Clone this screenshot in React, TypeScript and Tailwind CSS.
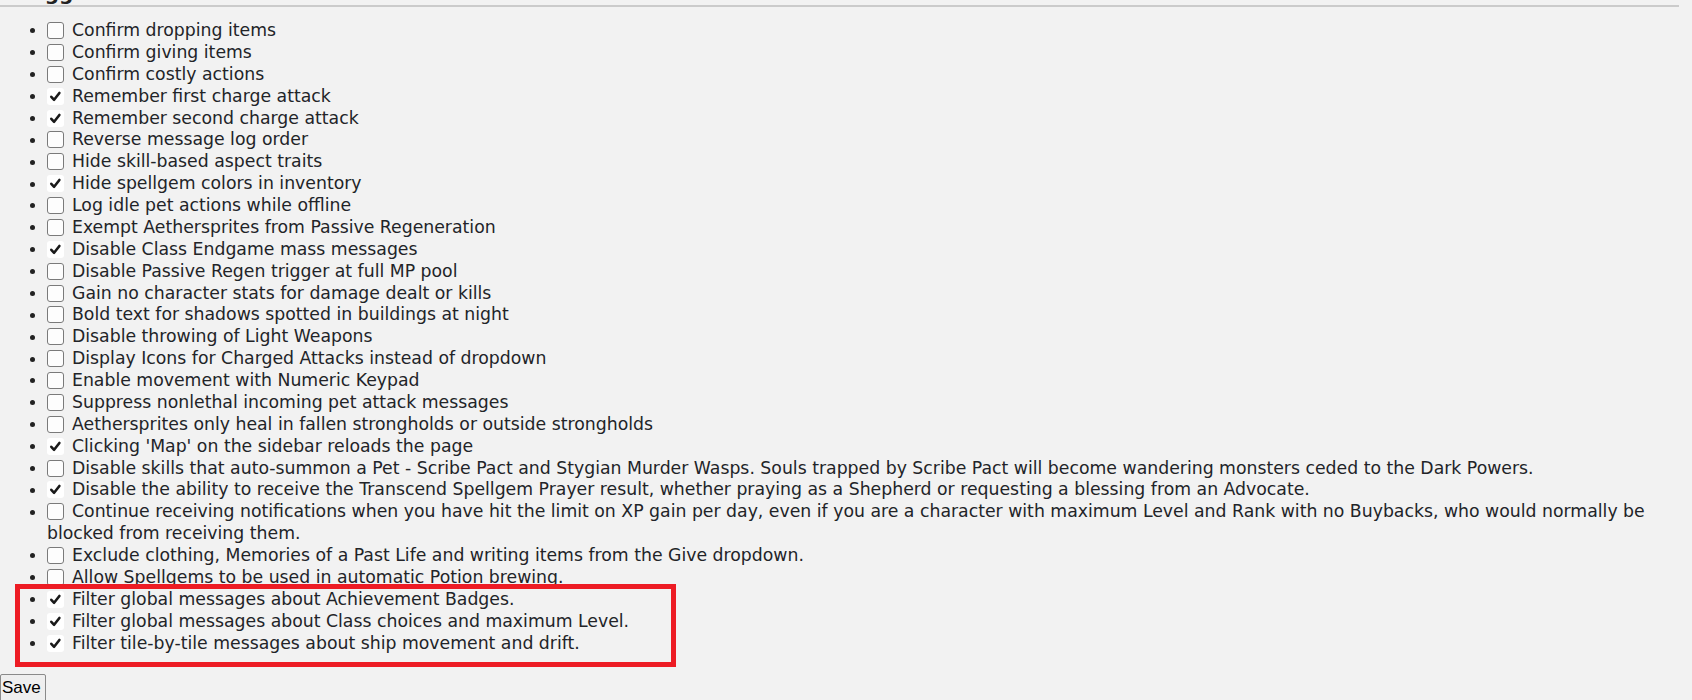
import React from "react";

type Item = { label: string; checked?: boolean };

const items: Item[] = [
  { label: "Confirm dropping items" },
  { label: "Confirm giving items" },
  { label: "Confirm costly actions" },
  { label: "Remember first charge attack", checked: true },
  { label: "Remember second charge attack", checked: true },
  { label: "Reverse message log order" },
  { label: "Hide skill-based aspect traits" },
  { label: "Hide spellgem colors in inventory", checked: true },
  { label: "Log idle pet actions while offline" },
  { label: "Exempt Aethersprites from Passive Regeneration" },
  { label: "Disable Class Endgame mass messages", checked: true },
  { label: "Disable Passive Regen trigger at full MP pool" },
  { label: "Gain no character stats for damage dealt or kills" },
  { label: "Bold text for shadows spotted in buildings at night" },
  { label: "Disable throwing of Light Weapons" },
  { label: "Display Icons for Charged Attacks instead of dropdown" },
  { label: "Enable movement with Numeric Keypad" },
  { label: "Suppress nonlethal incoming pet attack messages" },
  { label: "Aethersprites only heal in fallen strongholds or outside strongholds" },
  { label: "Clicking 'Map' on the sidebar reloads the page", checked: true },
  {
    label:
      "Disable skills that auto-summon a Pet - Scribe Pact and Stygian Murder Wasps. Souls trapped by Scribe Pact will become wandering monsters ceded to the Dark Powers.",
  },
  {
    label:
      "Disable the ability to receive the Transcend Spellgem Prayer result, whether praying as a Shepherd or requesting a blessing from an Advocate.",
    checked: true,
  },
  {
    label:
      "Continue receiving notifications when you have hit the limit on XP gain per day, even if you are a character with maximum Level and Rank with no Buybacks, who would normally be blocked from receiving them.",
  },
  { label: "Exclude clothing, Memories of a Past Life and writing items from the Give dropdown." },
  { label: "Allow Spellgems to be used in automatic Potion brewing." },
  { label: "Filter global messages about Achievement Badges.", checked: true },
  { label: "Filter global messages about Class choices and maximum Level.", checked: true },
  { label: "Filter tile-by-tile messages about ship movement and drift.", checked: true },
];

function Box({ checked }: { checked?: boolean }) {
  if (checked) {
    return (
      <span className="inline-block align-[-3px] w-[17px] h-[17px] mr-[8px] rounded-[3px] bg-white">
        <svg width="17" height="17" viewBox="0 0 17 17">
          <path d="M4.3 8.8 L7.1 11.8 L12.4 5" fill="none" stroke="#1a1a1a" strokeWidth="2.6" strokeLinecap="round" strokeLinejoin="round" />
        </svg>
      </span>
    );
  }
  return (
    <span className="inline-block align-[-3px] w-[17px] h-[17px] mr-[8px] rounded-[3px] border border-[#7a7a7a] bg-[#fdfdfd] box-border" />
  );
}

export default function App() {
  return (
    <div
      className="relative w-[1692px] h-[700px] overflow-hidden bg-[#f2f2f2] text-[#222428]"
      style={{ fontFamily: '"DejaVu Sans", Verdana, sans-serif' }}
    >
      <div className="h-[5px] overflow-hidden relative" aria-hidden="true">
        <div className="absolute left-[20px] bottom-[0px] font-bold text-[20px] leading-[20px] text-[#222]" style={{ transform: "translateY(-2px)" }}>
          <span className="invisible">To</span>gg
        </div>
      </div>
      <div className="w-[1679px] h-[2px] bg-[#cbcbcb]" />
      <ul className="mt-[13px] pl-[30px] text-[17.3px] leading-[21.87px]">
        {items.map((it, i) => (
          <li key={i} className="flex items-start">
            <span className="shrink-0 w-[17px] h-[21.87px] flex items-center">
              <span className="block w-[5px] h-[5px] rounded-full bg-[#222]" />
            </span>
            <div className="w-[1632px]">
              <Box checked={it.checked} />
              {it.label}
            </div>
          </li>
        ))}
      </ul>
      <div className="mt-[20px]">
        <button
          className="h-[28px] pl-[1px] pr-[4px] border border-[#8a8a8a] rounded-[2px] bg-[#efefef] text-[17px] leading-[24px] text-black"
          style={{ fontFamily: '"Liberation Sans", Arial, sans-serif' }}
        >
          Save
        </button>
      </div>
      <div className="absolute left-[15px] top-[584px] w-[661px] h-[83px] border-[5px] border-[#ed1c24]" />
    </div>
  );
}
